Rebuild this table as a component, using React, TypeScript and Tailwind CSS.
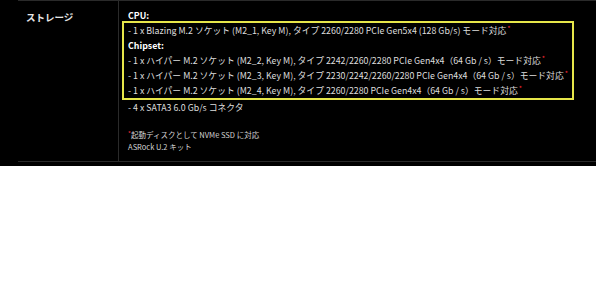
const font = { fontFamily: '"Noto Sans CJK JP", "Noto Sans", sans-serif' };

function Mark() {
  return <span className="relative -top-[3px] ml-[1px] text-[7px] leading-none text-[#ff2a36]">*</span>;
}

const chipsetLines = [
  "- 1 x ハイパー M.2 ソケット (M2_2, Key M), タイプ 2242/2260/2280 PCIe Gen4x4（64 Gb / s）モード対応",
  "- 1 x ハイパー M.2 ソケット (M2_3, Key M), タイプ 2230/2242/2260/2280 PCIe Gen4x4（64 Gb / s）モード対応",
  "- 1 x ハイパー M.2 ソケット (M2_4, Key M), タイプ 2260/2280 PCIe Gen4x4（64 Gb / s）モード対応",
];

export default function App() {
  return (
    <div className="w-full bg-white min-h-[283px]" style={font}>
      <div className="bg-black pl-[18px] pb-[4px]">
        <div className="flex border-t border-b border-[#2a2a2a]">
          <div className="w-[112px] pl-2 pt-[9px] text-[9.5px] font-bold text-[#e6e6e6] leading-[14px]">
            ストレージ
          </div>
          <div className="flex-1 border-l border-[#2a2a2a] pl-[3px] pr-[22px] pt-[9px] pb-[9px] text-[#dedede] text-[8.8px]">
            <div className="pl-[6px] font-bold text-white leading-[11px]">CPU:</div>
            <div className="border-2 border-[#e6e64a] px-1 leading-[15px] whitespace-nowrap">
              <div>
                - 1 x Blazing M.2 ソケット (M2_1, Key M), タイプ 2260/2280 PCIe Gen5x4 (128 Gb/s) モード対応
                <Mark />
              </div>
              <div className="font-bold text-white">Chipset:</div>
              {chipsetLines.map((line) => (
                <div key={line}>
                  {line}
                  <Mark />
                </div>
              ))}
            </div>
            <div className="pl-[6px] leading-[15px]">- 4 x SATA3 6.0 Gb/s コネクタ</div>
            <div className="pl-[6px] mt-[14px] text-[7.5px] leading-[11px] text-[#d4d4d4]">
              <div>
                <span className="relative -top-[2px] text-[6px] text-[#ff2a36]">*</span>起動ディスクとして NVMe SSD に対応
              </div>
              <div>ASRock U.2 キット</div>
            </div>
          </div>
        </div>
      </div>
    </div>
  );
}
